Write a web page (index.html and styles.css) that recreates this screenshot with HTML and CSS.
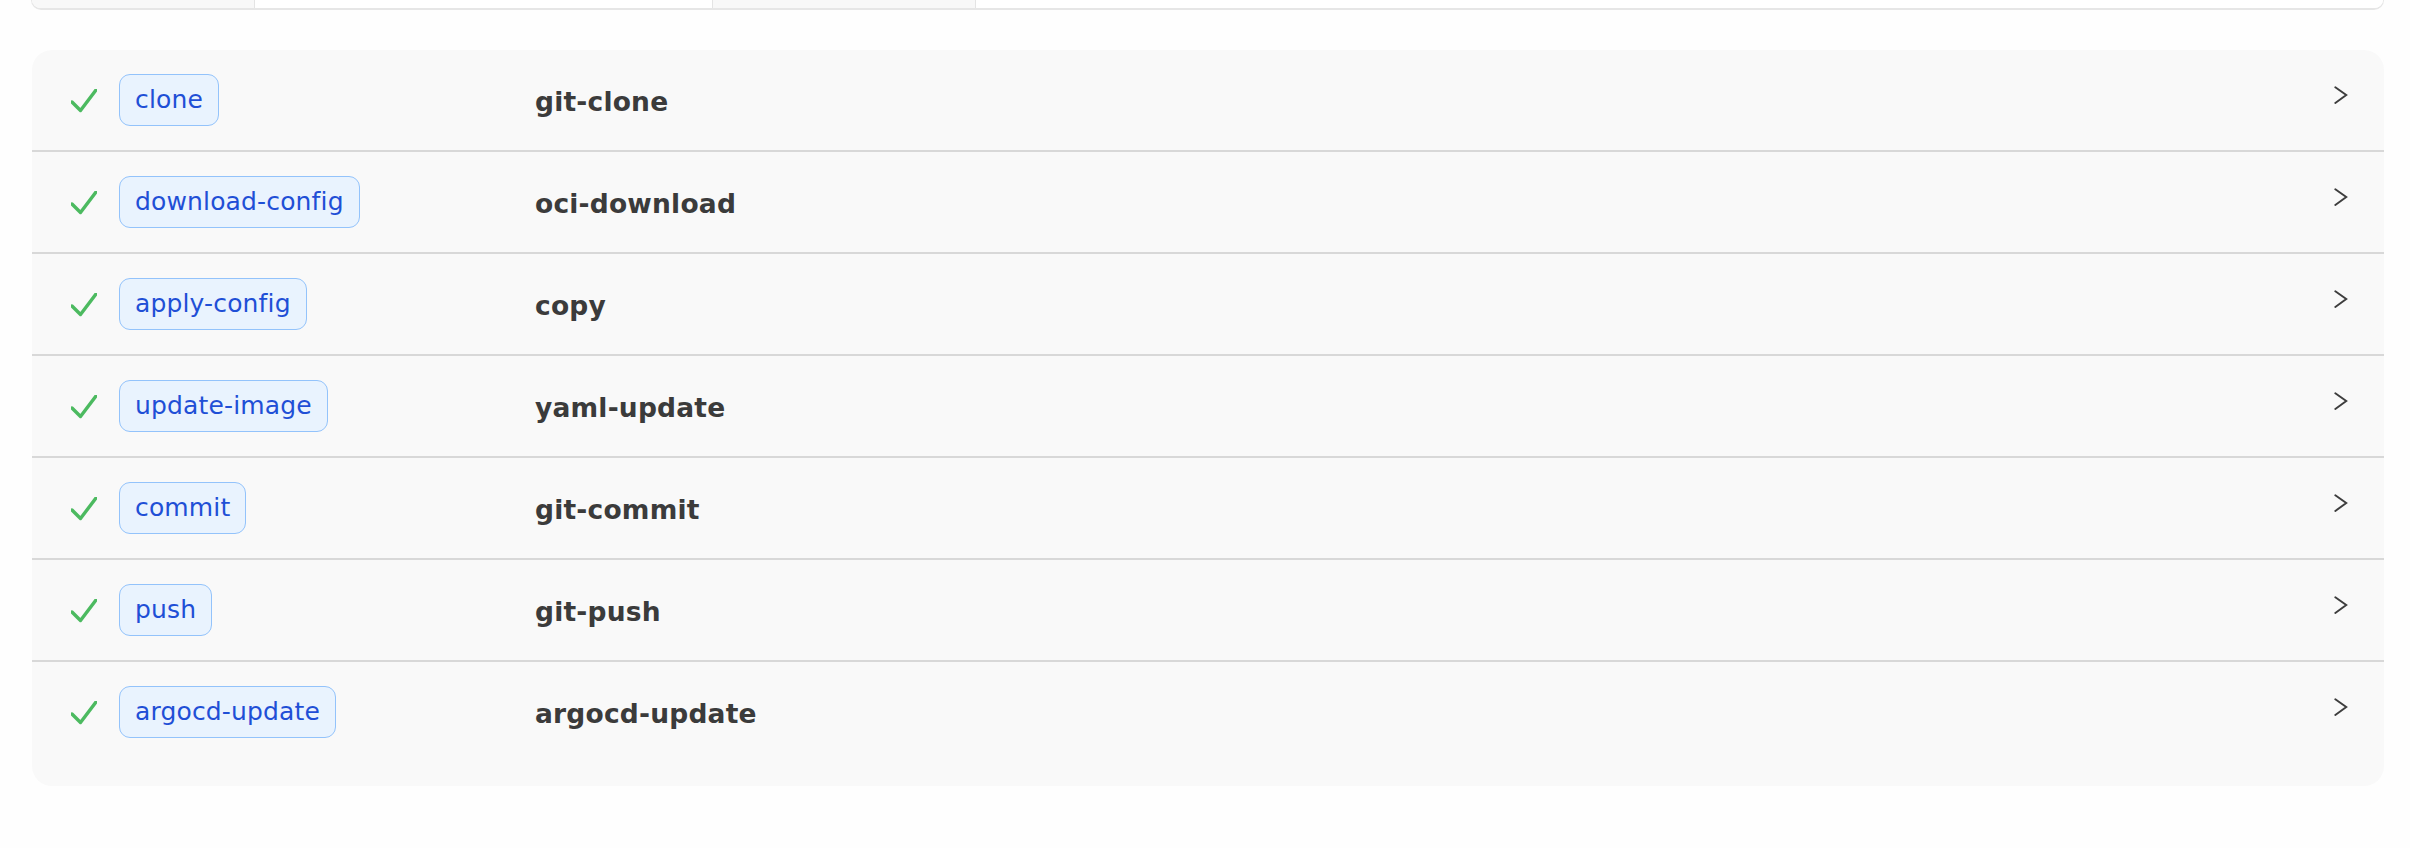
FILE: index.html
```html
<!DOCTYPE html>
<html lang="en">
<head>
<meta charset="utf-8">
<title>Pipeline steps</title>
<link rel="stylesheet" href="styles.css">
</head>
<body>
<div class="page">
  <div class="tabs">
    <div class="tab tab-a"></div>
    <div class="tab tab-b"></div>
    <div class="tab tab-c"></div>
    <div class="tab tab-d"></div>
  </div>

  <div class="steps">
    <div class="step">
      <svg class="check" viewBox="0 0 26 24"><path d="M1 13 L9.5 21.5 L25 1"/></svg>
      <div class="badge-cell"><span class="badge">clone</span></div>
      <div class="name">git-clone</div>
      <svg class="chev" viewBox="0 0 16 22"><path d="M1.5 1.5 L14 10.5 L1.5 19.5"/></svg>
    </div>
    <div class="step">
      <svg class="check" viewBox="0 0 26 24"><path d="M1 13 L9.5 21.5 L25 1"/></svg>
      <div class="badge-cell"><span class="badge">download-config</span></div>
      <div class="name">oci-download</div>
      <svg class="chev" viewBox="0 0 16 22"><path d="M1.5 1.5 L14 10.5 L1.5 19.5"/></svg>
    </div>
    <div class="step">
      <svg class="check" viewBox="0 0 26 24"><path d="M1 13 L9.5 21.5 L25 1"/></svg>
      <div class="badge-cell"><span class="badge">apply-config</span></div>
      <div class="name">copy</div>
      <svg class="chev" viewBox="0 0 16 22"><path d="M1.5 1.5 L14 10.5 L1.5 19.5"/></svg>
    </div>
    <div class="step">
      <svg class="check" viewBox="0 0 26 24"><path d="M1 13 L9.5 21.5 L25 1"/></svg>
      <div class="badge-cell"><span class="badge">update-image</span></div>
      <div class="name">yaml-update</div>
      <svg class="chev" viewBox="0 0 16 22"><path d="M1.5 1.5 L14 10.5 L1.5 19.5"/></svg>
    </div>
    <div class="step">
      <svg class="check" viewBox="0 0 26 24"><path d="M1 13 L9.5 21.5 L25 1"/></svg>
      <div class="badge-cell"><span class="badge">commit</span></div>
      <div class="name">git-commit</div>
      <svg class="chev" viewBox="0 0 16 22"><path d="M1.5 1.5 L14 10.5 L1.5 19.5"/></svg>
    </div>
    <div class="step">
      <svg class="check" viewBox="0 0 26 24"><path d="M1 13 L9.5 21.5 L25 1"/></svg>
      <div class="badge-cell"><span class="badge">push</span></div>
      <div class="name">git-push</div>
      <svg class="chev" viewBox="0 0 16 22"><path d="M1.5 1.5 L14 10.5 L1.5 19.5"/></svg>
    </div>
    <div class="step last">
      <svg class="check" viewBox="0 0 26 24"><path d="M1 13 L9.5 21.5 L25 1"/></svg>
      <div class="badge-cell"><span class="badge">argocd-update</span></div>
      <div class="name">argocd-update</div>
      <svg class="chev" viewBox="0 0 16 22"><path d="M1.5 1.5 L14 10.5 L1.5 19.5"/></svg>
    </div>
  </div>
</div>
</body>
</html>
```

FILE: styles.css
```css
* { box-sizing: border-box; }

html, body {
  margin: 0;
  padding: 0;
  background: #fefefe;
  font-family: "DejaVu Sans", "Liberation Sans", sans-serif;
}

.page {
  padding: 0 26px 0 31px;
}

.tabs {
  display: flex;
  height: 10px;
  border: 1px solid #e6e6e6;
  border-top: none;
  border-bottom: 2px solid #e6e6e6;
  border-radius: 0 0 16px 16px;
  overflow: hidden;
  background: #ffffff;
}

.tab { height: 100%; }
.tab-a { width: 223px; background: #f8f8f8; border-right: 1px solid #e4e4e4; }
.tab-b { width: 458px; background: #ffffff; border-right: 1px solid #e4e4e4; }
.tab-c { width: 263px; background: #f8f8f8; border-right: 1px solid #e4e4e4; }
.tab-d { flex: 1; background: #ffffff; }

.steps {
  margin: 40px 0 0 1px;
  background: #f9f9f9;
  border-radius: 20px;
  padding-bottom: 24px;
}

.step {
  display: grid;
  grid-template-columns: 25px 393px 1fr 13px;
  column-gap: 23px;
  align-items: center;
  height: 102px;
  padding: 0 37px 0 39px;
  border-bottom: 2px solid #d8d8d8;
}

.step.last {
  border-bottom: none;
  height: 100px;
}

.check {
  width: 26px;
  height: 24px;
  margin-top: 1px;
}
.check path {
  fill: none;
  stroke: #4cba60;
  stroke-width: 3.4;
  stroke-linecap: round;
  stroke-linejoin: round;
}

.badge-cell { display: flex; }

.badge {
  display: inline-block;
  font-size: 25px;
  line-height: 36px;
  padding: 7px 15px;
  color: #1f4fd6;
  background: #e9f3fe;
  border: 1.5px solid #93c3fb;
  border-radius: 11px;
  letter-spacing: 0.15px;
}

.name {
  font-size: 26.5px;
  font-weight: 700;
  color: #3b3b3b;
  letter-spacing: 0.2px;
  padding-top: 2px;
}

.chev {
  width: 14px;
  height: 21px;
  margin-top: -10px;
}
.chev path {
  fill: none;
  stroke: #3d3d3d;
  stroke-width: 2.2;
  stroke-linecap: round;
  stroke-linejoin: miter;
}
```
